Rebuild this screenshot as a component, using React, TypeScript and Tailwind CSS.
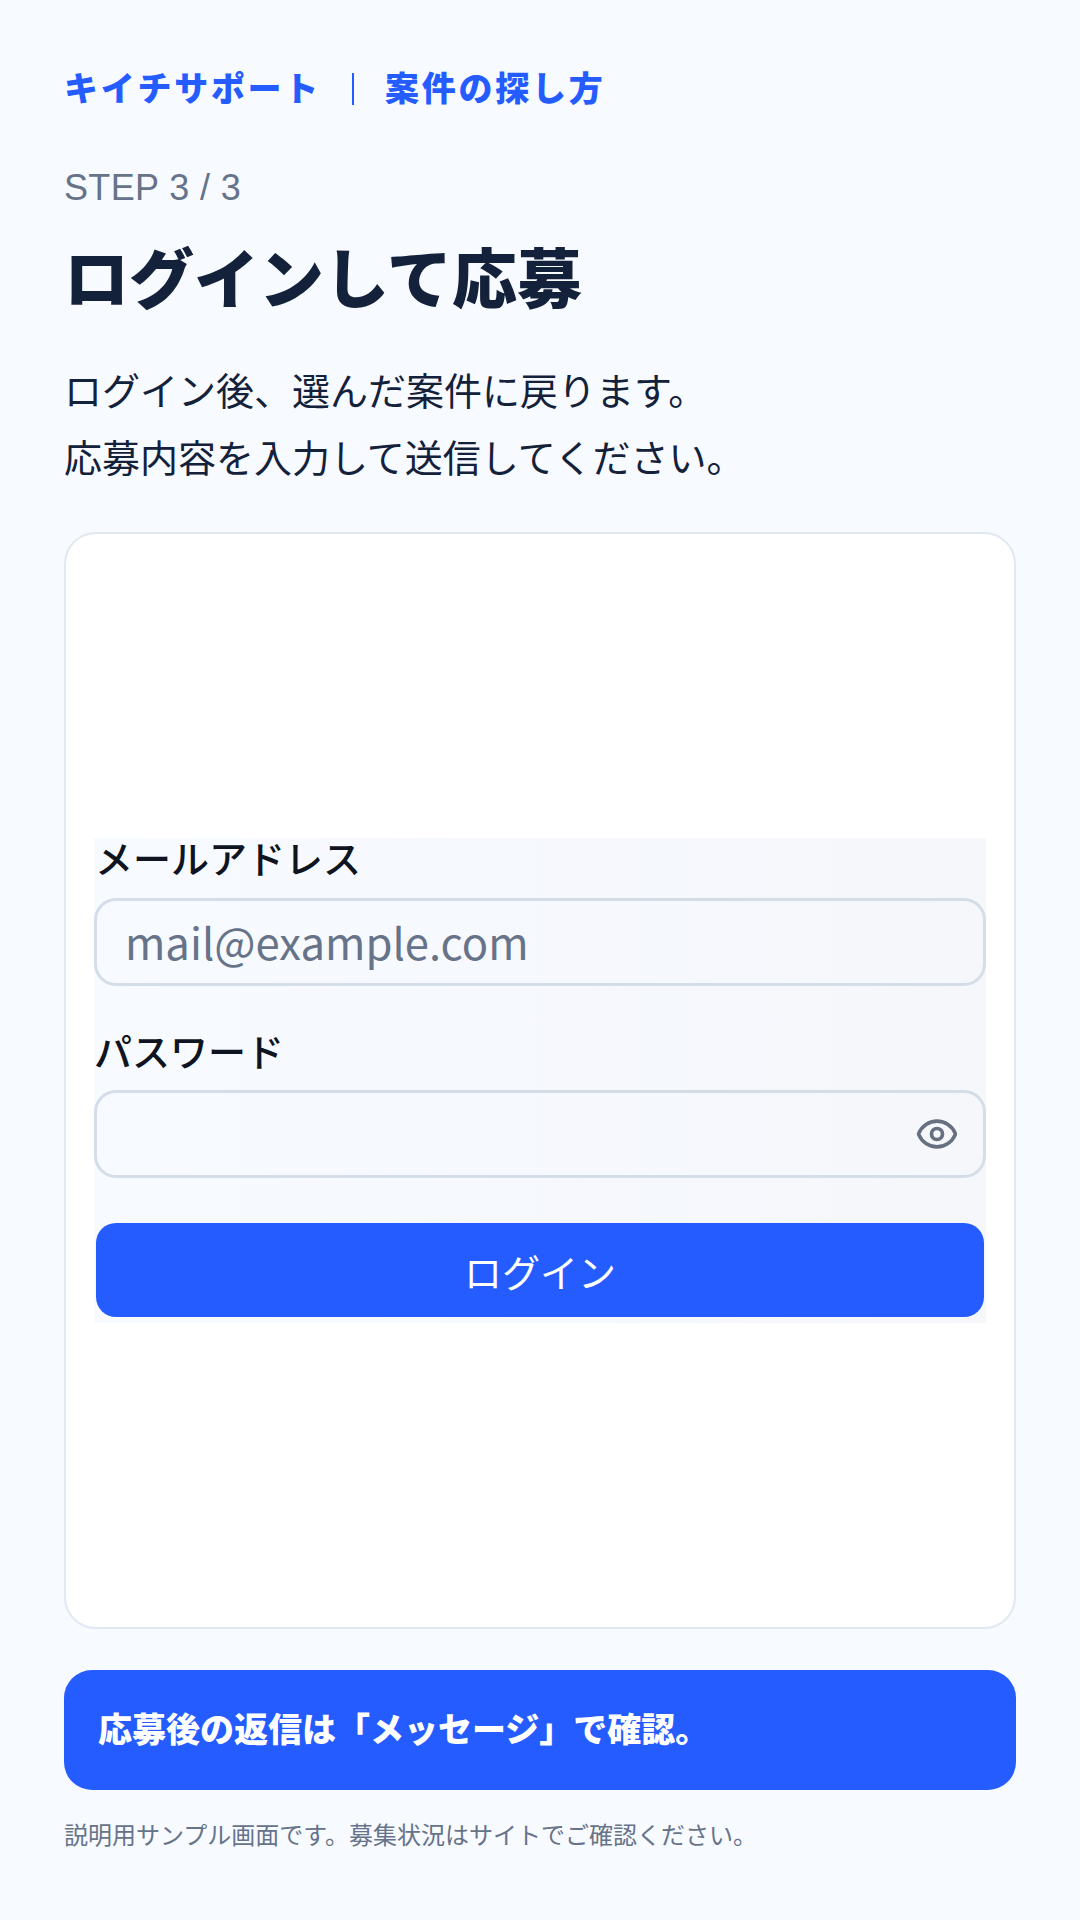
import React from 'react';
import { Eye } from 'lucide-react';

const App: React.FC = () => {
  return (
    <div className="min-h-[1920px] bg-[#f7faff] px-16 pt-[68px] font-['Liberation_Sans','Noto_Sans_CJK_JP',sans-serif] text-[#14213a]">
      <header className="flex items-center text-[34px] leading-[42px] font-black tracking-[0.08em] text-[#245cff]">
        <span>キイチサポート</span>
        <span className="mx-[31px] h-[32px] w-[2px] bg-[#245cff]" />
        <span>案件の探し方</span>
      </header>

      <p className="mt-[56px] text-[36px] leading-[44px] tracking-[0.01em] text-[#667389]">STEP 3 / 3</p>
      <h1 className="mt-[29px] text-[65px] leading-[84px] font-black">ログインして応募</h1>
      <div className="mt-[36px] text-[38px] leading-[67px]">
        <p>ログイン後、選んだ案件に戻ります。</p>
        <p>応募内容を入力して送信してください。</p>
      </div>

      <main className="mt-[39px] flex h-[1097px] items-center rounded-[32px] border-2 border-[#e1e8f2] bg-white px-[28px]">
        <form className="h-[485px] w-full bg-linear-to-r from-[#f7faff] to-[#f5f7fb] font-['Noto_Sans_CJK_JP',sans-serif] text-[#0e1420]">
          <label className="block pl-[1px] text-[38px] leading-[38px] font-medium">メールアドレス</label>
          <div className="mt-[22px] flex h-[88px] items-center rounded-[22px] border-[3px] border-[#d5dde8] pl-[28px] text-[43.6px] text-[#667389]">
            mail@example.com
          </div>
          <label className="mt-[41px] block text-[38px] leading-[46px] font-medium">パスワード</label>
          <div className="mt-[17px] flex h-[88px] items-center justify-end rounded-[22px] border-[3px] border-[#d5dde8] pr-[24px]">
            <Eye className="h-[44px] w-[44px] text-[#667080]" strokeWidth={2} />
          </div>
          <button
            type="button"
            className="mx-[2px] mt-[45px] flex h-[94px] w-[888px] items-center justify-center rounded-[20px] bg-[#245cff] text-[38px] text-white"
          >
            ログイン
          </button>
        </form>
      </main>

      <div className="mt-[41px] flex h-[120px] items-center rounded-[28px] bg-[#245cff] px-[34px] text-[34px] font-black text-white">
        応募後の返信は「メッセージ」で確認。
      </div>
      <p className="mt-[29px] text-[24px] leading-[34px] text-[#667389]">
        説明用サンプル画面です。募集状況はサイトでご確認ください。
      </p>
    </div>
  );
};

export default App;
